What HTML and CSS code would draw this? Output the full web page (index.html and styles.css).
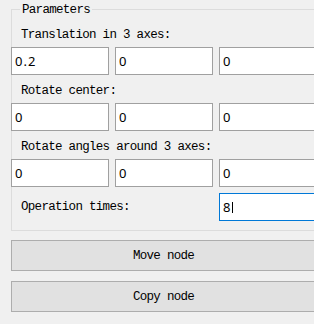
FILE: index.html
```html
<!DOCTYPE html>
<html lang="en">
<head>
    <meta charset="UTF-8">
    <meta name="viewport" content="width=device-width, initial-scale=1.0">
    <title>Node Transform</title>
    <link rel="stylesheet" href="styles.css">
</head>
<body>
    <div class="panel">
        <div class="group">
            <span class="legend">Parameters</span>

            <div class="label first">Translation in 3 axes:</div>
            <div class="row">
                <div class="field">0.2</div>
                <div class="field">0</div>
                <div class="field">0</div>
            </div>

            <div class="label">Rotate center:</div>
            <div class="row">
                <div class="field">0</div>
                <div class="field">0</div>
                <div class="field">0</div>
            </div>

            <div class="label">Rotate angles around 3 axes:</div>
            <div class="row">
                <div class="field">0</div>
                <div class="field">0</div>
                <div class="field">0</div>
            </div>

            <div class="op-row">
                <span class="op-label">Operation times:</span>
                <div class="field focus">8<span class="caret"></span></div>
            </div>
        </div>

        <button class="action">Move node</button>
        <button class="action">Copy node</button>
    </div>
</body>
</html>
```

FILE: styles.css
```css
body {
    margin: 0;
    background-color: #f0f0f0;
    overflow: hidden;
    font-family: "Liberation Mono", monospace;
    font-size: 12.5px;
    letter-spacing: -0.7px;
    color: #000;
}

/* window is narrower than the dialog, so clip the right side */
.panel {
    box-sizing: border-box;
    width: 314px;
    height: 324px;
    padding: 9px 0 0 11px;
    overflow: hidden;
}

.group {
    position: relative;
    width: 320px;
    height: 220px;
    border: 1px solid #dcdcdc;
}

.legend {
    position: absolute;
    top: -8px;
    left: 8px;
    padding: 0 2px;
    line-height: 16px;
    background-color: #f0f0f0;
}

.label {
    line-height: 16px;
    padding-left: 9px;
    margin: 8px 0 4px;
}

.label.first {
    margin-top: 17px;
}

.row {
    display: flex;
    gap: 6px;
    margin-left: -1px;
}

.field {
    flex: none;
    box-sizing: border-box;
    width: 98px;
    height: 28px;
    padding-left: 3px;
    border: 1px solid #a0a0a0;
    background-color: #fff;
    font-family: "Noto Sans", sans-serif;
    font-size: 13px;
    letter-spacing: 1px;
    line-height: 26px;
}

.field.focus {
    border-color: #0078d7;
}

.caret {
    display: inline-block;
    width: 1px;
    height: 11px;
    margin-left: 1px;
    background-color: #000;
    vertical-align: -1px;
}

.op-row {
    display: flex;
    align-items: center;
    margin: 6px 0 0 -1px;
}

.op-label {
    width: 198px;
    padding-left: 10px;
}

.action {
    display: block;
    flex: none;
    width: 305px;
    height: 31px;
    margin-top: 9px;
    padding: 0;
    border: 1px solid #adadad;
    background-color: #e1e1e1;
    color: #000;
    font: inherit;
    letter-spacing: inherit;
}

.action + .action {
    margin-top: 10px;
}
```
